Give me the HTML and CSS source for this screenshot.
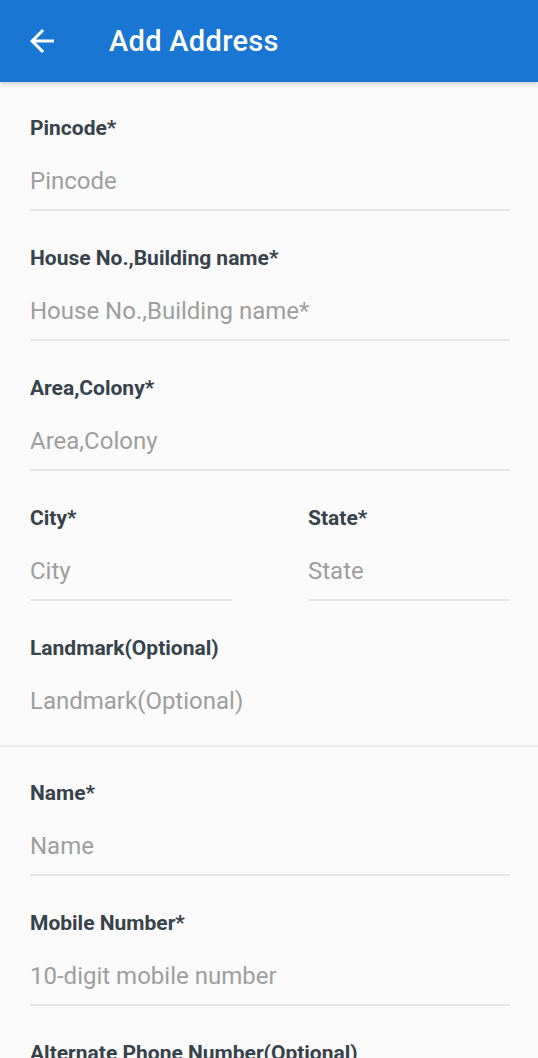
FILE: index.html
```html
<!DOCTYPE html>
<html lang="en">
<head>
    <meta charset="UTF-8">
    <meta name="viewport" content="width=device-width, initial-scale=1.0">
    <title>Add Address</title>
    <link rel="stylesheet" href="styles.css">
</head>
<body>

    <header class="app-bar">
        <button class="back-btn" aria-label="Back">
            <svg viewBox="0 0 24 24" width="36" height="36">
                <path fill="#fff" d="M20 11H7.83l5.59-5.59L12 4l-8 8 8 8 1.41-1.41L7.83 13H20v-2z"/>
            </svg>
        </button>
        <h1 class="app-title">Add Address</h1>
    </header>

    <main>
        <section class="form-section">
            <div class="field">
                <label class="field-label">Pincode*</label>
                <input class="field-input" type="text" placeholder="Pincode">
            </div>
            <div class="field">
                <label class="field-label">House No.,Building name*</label>
                <input class="field-input" type="text" placeholder="House No.,Building name*">
            </div>
            <div class="field">
                <label class="field-label">Area,Colony*</label>
                <input class="field-input" type="text" placeholder="Area,Colony">
            </div>
            <div class="field-row">
                <div class="field">
                    <label class="field-label">City*</label>
                    <input class="field-input" type="text" placeholder="City">
                </div>
                <div class="field">
                    <label class="field-label">State*</label>
                    <input class="field-input" type="text" placeholder="State">
                </div>
            </div>
            <div class="field">
                <label class="field-label">Landmark(Optional)</label>
                <input class="field-input no-line" type="text" placeholder="Landmark(Optional)">
            </div>
        </section>

        <section class="form-section">
            <div class="field">
                <label class="field-label">Name*</label>
                <input class="field-input" type="text" placeholder="Name">
            </div>
            <div class="field">
                <label class="field-label">Mobile Number*</label>
                <input class="field-input" type="tel" placeholder="10-digit mobile number">
            </div>
            <div class="field">
                <label class="field-label">Alternate Phone Number(Optional)</label>
                <input class="field-input" type="tel" placeholder="Phone Number">
            </div>
        </section>
    </main>

</body>
</html>
```

FILE: styles.css
```css
* {
    margin: 0;
    padding: 0;
    box-sizing: border-box;
    font-family: Roboto, 'Noto Sans', sans-serif;
}

body {
    background: #fafafa;
    color: #37424a;
    overflow: hidden;
}

.app-bar {
    height: 82px;
    background: #1976d2;
    display: flex;
    align-items: center;
    padding-left: 24px;
    box-shadow: 0 2px 4px rgba(0, 0, 0, 0.18);
    position: relative;
    z-index: 1;
}

.back-btn {
    background: none;
    border: none;
    width: 36px;
    height: 36px;
    display: flex;
    cursor: pointer;
}

.app-title {
    color: #fff;
    font-size: 29px;
    font-weight: 500;
    margin-left: 49px;
    letter-spacing: 0.3px;
}

.form-section {
    padding: 33px 28px 14px 30px;
    display: flex;
    flex-direction: column;
    gap: 34px;
    border-bottom: 2px solid #ececec;
}

.field {
    display: flex;
    flex-direction: column;
}

.field-row {
    display: grid;
    grid-template-columns: 1fr 1fr;
    gap: 76px;
}

.field-label {
    font-size: 21px;
    line-height: 26px;
    font-weight: 700;
    color: #37424a;
}

.field-input {
    margin-top: 25px;
    height: 45px;
    padding: 0 0 13px;
    font-size: 24px;
    line-height: 30px;
    color: #333;
    background: transparent;
    border: none;
    border-bottom: 2px solid #e6e6e6;
    outline: none;
    width: 100%;
}

.field-input::placeholder {
    color: #9e9e9e;
}

.field-input.no-line {
    border-bottom-color: transparent;
}
```
